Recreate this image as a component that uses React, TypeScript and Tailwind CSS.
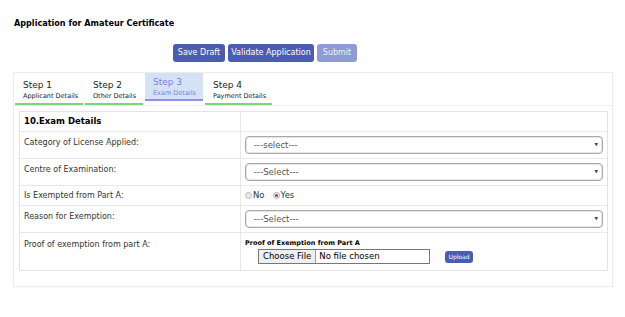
const rows = [
  { label: 'Category of License Applied:', kind: 'select', value: '---select---' },
  { label: 'Centre of Examination:', kind: 'select', value: '---Select---' },
  { label: 'Is Exempted from Part A:', kind: 'radio' },
  { label: 'Reason for Exemption:', kind: 'select', value: '---Select---' },
];

const steps = [
  { step: 'Step 1', name: 'Applicant Details', w: 'w-[68px]', done: true },
  { step: 'Step 2', name: 'Other Details', w: 'w-[58px]', done: true },
  { step: 'Step 3', name: 'Exam Details', w: 'w-[58px]', active: true },
  { step: 'Step 4', name: 'Payment Details', w: 'w-[67px]', done: true },
];

const Select = ({ value }: { value: string }) => (
  <div className="flex h-[18px] w-[358px] items-center justify-between rounded-[4px] border border-[#a9a9a9] bg-white pl-[8px] pr-[4px] text-[8.5px] text-[#555] shadow-[inset_0_0_0_1px_#e6e6e6]">
    <span>{value}</span>
    <span className="text-[4.5px] text-[#444]">▼</span>
  </div>
);

const App = () => {
  return (
    <div className="h-[317px] w-[625px] bg-white font-['DejaVu_Sans',sans-serif] text-[#333]">
      <h1 className="pl-[14px] pt-[17px] font-['DejaVu_Sans_Condensed','DejaVu_Sans',sans-serif] text-[9px] font-bold leading-[13px] text-black">
        Application for Amateur Certificate
      </h1>

      {/* actions */}
      <div className="mt-[14px] flex gap-[3px] pl-[173px]">
        <button className="h-[18px] w-[52px] rounded-[3px] bg-[#4b5cb3] text-[8px] text-white">Save Draft</button>
        <button className="h-[18px] w-[86px] rounded-[3px] bg-[#4b5cb3] text-[8px] text-white">Validate Application</button>
        <button className="h-[18px] w-[40px] rounded-[3px] bg-[#8e9bd6] text-[8px] text-[#eef0fa]">Submit</button>
      </div>

      {/* card */}
      <div className="ml-[13px] mt-[10px] h-[215px] w-[600px] border border-[#ececec] shadow-[0_1px_2px_rgba(0,0,0,0.04)]">
        <div className="flex h-[33px] gap-[2px] border-b border-[#eeeeee] pl-[1px]">
          {steps.map((s) =>
            s.active ? (
              <div key={s.step} className={`${s.w} h-[28px] border-b-[2px] border-[#8d8ee6] bg-[#d5e2f6] pl-[8px] pt-[3px] text-[#7a7ee0]`}>
                <div className="text-[9px] leading-[12px]">{s.step}</div>
                <div className="text-[6.5px] leading-[10px]">{s.name}</div>
              </div>
            ) : (
              <div key={s.step} className={`${s.w} h-[32px] border-b-[2px] border-[#78d878] pl-[8px] pt-[6px] text-[#222]`}>
                <div className="text-[9px] leading-[12px]">{s.step}</div>
                <div className="text-[6.5px] leading-[10px]">{s.name}</div>
              </div>
            ),
          )}
        </div>

        <div className="ml-[5px] mt-[5px] w-[589px] border border-[#e3e3e3]">
          <div className="grid h-[20px] grid-cols-[221px_1fr] border-b border-[#e8e8e8]">
            <div className="flex items-center border-r border-[#e8e8e8] pl-[4px] text-[8.5px] font-bold text-black">10.Exam Details</div>
            <div />
          </div>

          {rows.map((r) => (
            <div
              key={r.label}
              className={`grid grid-cols-[221px_1fr] border-b border-[#e8e8e8] ${r.kind === 'radio' ? 'h-[20px]' : 'h-[27px]'}`}
            >
              <div className={`border-r border-[#e8e8e8] pl-[4px] text-[8px] ${r.kind === 'radio' ? 'flex items-center' : 'pt-[5px]'}`}>
                {r.label}
              </div>
              {r.kind === 'select' ? (
                <div className="flex items-center pl-[4px]">
                  <Select value={r.value ?? ''} />
                </div>
              ) : (
                <div className="flex items-center pl-[4px] text-[8.5px]">
                  <span className="mr-[1px] h-[7px] w-[7px] rounded-full border border-[#bbb] bg-[#e8e8e8]" />
                  <span>No</span>
                  <span className="ml-[8px] mr-[1px] flex h-[7px] w-[7px] items-center justify-center rounded-full border border-[#aaa] bg-[#f4f4f4]">
                    <span className="h-[3px] w-[3px] rounded-full bg-[#555]" />
                  </span>
                  <span>Yes</span>
                </div>
              )}
            </div>
          ))}

          <div className="grid h-[37px] grid-cols-[221px_1fr]">
            <div className="border-r border-[#e8e8e8] pl-[4px] pt-[6px] text-[8px]">Proof of exemption from part A:</div>
            <div className="pl-[4px] pt-[6px]">
              <div className="text-[6.5px] font-bold leading-[9px] text-black">Proof of Exemption from Part A</div>
              <div className="mt-[1px] flex items-center">
                <div className="ml-[13px] flex h-[15px] w-[172px] items-center border border-[#777] text-[8.5px] text-black">
                  <span className="flex h-full items-center border-r border-[#999] bg-[#efefef] px-[4px]">Choose File</span>
                  <span className="pl-[3px]">No file chosen</span>
                </div>
                <button className="ml-[15px] h-[12px] w-[28px] rounded-[3px] bg-[#4b5cb3] text-[6px] text-white">Upload</button>
              </div>
            </div>
          </div>
        </div>
      </div>
    </div>
  );
};

export default App;
